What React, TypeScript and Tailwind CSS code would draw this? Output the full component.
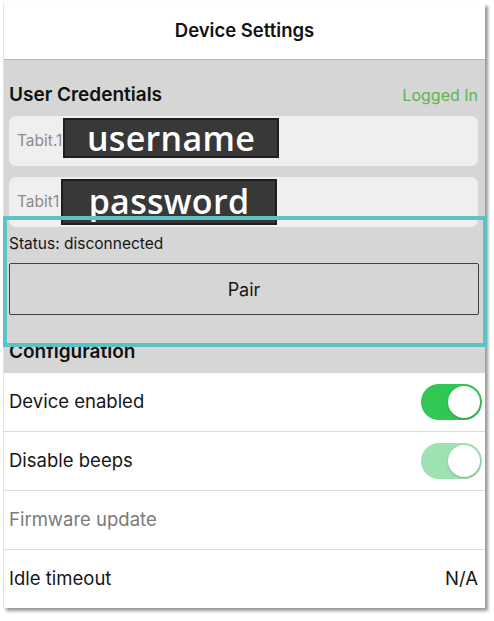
import React from "react";

function Toggle({ faded }: { faded?: boolean }) {
  return (
    <div
      className={
        "relative h-[36px] w-[61px] rounded-full " +
        (faded ? "bg-[#9fe2b2]" : "bg-[#32c655]")
      }
    >
      <div className="absolute right-[2px] top-[2px] h-[32px] w-[32px] rounded-full bg-white shadow-[0_1px_2px_rgba(0,0,0,0.25)]" />
    </div>
  );
}

function Redact({ text, className }: { text: string; className: string }) {
  return (
    <div
      className={
        "absolute flex justify-center border-2 border-[#1e1e1e] bg-[#383838] text-white " +
        className
      }
      style={{ fontFamily: '"Open Sans", sans-serif' }}
    >
      <span className="text-[34px] font-semibold leading-none tracking-[0.3px]">{text}</span>
    </div>
  );
}

export default function App() {
  return (
    <div
      className="min-h-[621px] w-[494px] bg-white pl-[3px] pt-[3px]"
      style={{ fontFamily: 'Inter, "Liberation Sans", sans-serif' }}
    >
      <div className="relative flex w-[482px] flex-col border-l border-[#e4e4e4] bg-white shadow-[3px_3px_3px_rgba(0,0,0,0.4)]">
        {/* header */}
        <div className="flex h-[57px] items-center justify-center border-b border-[#b5b5b5] bg-white">
          <span className="text-[18.5px] font-semibold text-[#111]">Device Settings</span>
        </div>

        {/* gray section */}
        <div className="flex flex-col bg-[#d6d6d6] px-[5px] pb-[9px] pt-[20px]">
          <div className="flex h-[30px] items-center justify-between pr-[2px]">
            <span className="text-[19px] font-semibold text-[#111]">User Credentials</span>
            <span className="text-[16px] text-[#5bb54b]">Logged In</span>
          </div>
          <div className="relative mr-[2px] mt-[6px] flex h-[50px] items-center rounded-[7px] bg-[#efefef] pl-[8px]">
            <span className="text-[15.5px] text-[#8c8c8c]">Tabit.1</span>
            <Redact text="username" className="left-[54px] top-[2px] h-[40px] w-[216px] items-center" />
          </div>
          <div className="relative mr-[2px] mt-[11px] flex h-[50px] items-center overflow-hidden rounded-[7px] bg-[#efefef] pl-[8px]">
            <span className="text-[15.5px] text-[#8c8c8c]">Tabit1</span>
            <Redact text="password" className="left-[52px] top-[2px] h-[46px] w-[216px] items-start pt-[3px]" />
          </div>
          <div className="flex h-[34px] items-center">
            <span className="text-[15.5px] text-[#161616]">Status: disconnected</span>
          </div>
          <div className="mr-[1px] mt-[2px] flex h-[52px] items-center justify-center rounded-[2px] border-[1.5px] border-[#3c4048] bg-[#d6d6d6]">
            <span className="text-[18px] text-[#161616]">Pair</span>
          </div>
          <div className="mt-[25px] flex h-[24px] items-center">
            <span className="text-[19px] font-semibold text-[#111]">Configuration</span>
          </div>
        </div>

        {/* list */}
        <div className="flex flex-col bg-white">
          <div className="flex h-[59px] items-center justify-between border-b border-[#dadada] pl-[5px] pr-[3px]">
            <span className="text-[18.5px] text-[#161616]">Device enabled</span>
            <Toggle />
          </div>
          <div className="flex h-[59px] items-center justify-between border-b border-[#dadada] pl-[5px] pr-[3px]">
            <span className="text-[18.5px] text-[#161616]">Disable beeps</span>
            <Toggle faded />
          </div>
          <div className="flex h-[59px] items-center justify-between border-b border-[#dadada] pl-[5px] pr-[3px]">
            <span className="text-[18.5px] text-[#7a7a7a]">Firmware update</span>
          </div>
          <div className="flex h-[58px] items-center justify-between pl-[5px] pr-[7px]">
            <span className="text-[18.5px] text-[#161616]">Idle timeout</span>
            <span className="text-[18.5px] text-[#161616]">N/A</span>
          </div>
        </div>

        {/* teal highlight annotation */}
        <div className="pointer-events-none absolute left-[-1px] top-[213px] h-[131px] w-[484px] border-[4.5px] border-[#5cc3c3]" />
      </div>
    </div>
  );
}
